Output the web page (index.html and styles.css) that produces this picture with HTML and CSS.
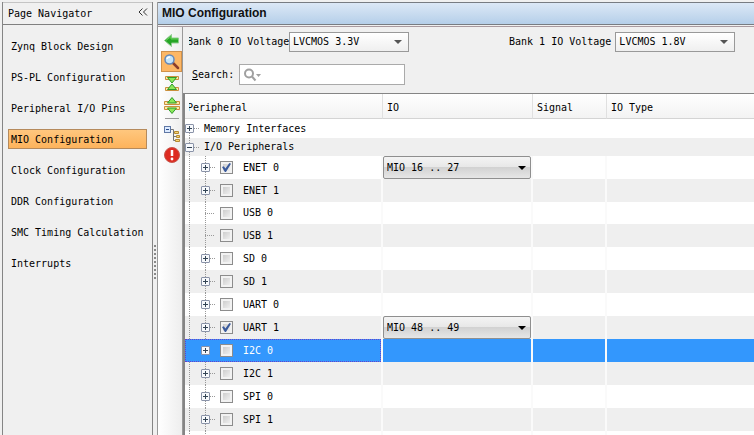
FILE: index.html
```html
<!DOCTYPE html>
<html lang="en">
<head>
<meta charset="utf-8">
<title>MIO Configuration</title>
<link rel="stylesheet" href="styles.css">
</head>
<body>
<div class="app">
  <nav class="navigator">
    <header class="nav-head">
      <span>Page Navigator</span>
      <button class="collapse" type="button" aria-label="Collapse">
        <svg width="10" height="8" viewBox="0 0 10 8"><path d="M4.5 .5 1 4l3.5 3.5M9 .5 5.5 4 9 7.500" fill="none" stroke="#333"/></svg>
      </button>
    </header>
    <div class="nav-list">
      <a href="#zynq">Zynq Block Design</a>
      <a href="#pspl">PS-PL Configuration</a>
      <a href="#pins">Peripheral I/O Pins</a>
      <a href="#mio" class="active">MIO Configuration</a>
      <a href="#clock">Clock Configuration</a>
      <a href="#ddr">DDR Configuration</a>
      <a href="#smc">SMC Timing Calculation</a>
      <a href="#irq">Interrupts</a>
    </div>
  </nav>
  <div class="splitter"><i></i></div>
  <main class="pane">
    <h1>MIO Configuration</h1>
    <div class="body">
      <div class="tools">
        <button type="button" aria-label="Back"><svg width="18" height="18" viewBox="0 0 18 18"><path d="M1.500 9.500 8.500 3.500v3.500h7v5h-7v3.500z" fill="#25a525" stroke="#8fce8f"/><path d="M3 9.500 8 5.500v2.500h7" fill="none" stroke="#64cf55"/></svg></button>
        <button type="button" class="on" aria-label="Search"><svg width="18" height="18" viewBox="0 0 18 18"><path d="M10 10l5 5" stroke="#8b3d2b" stroke-width="2.500" stroke-linecap="round"/><circle cx="6.500" cy="6.500" r="4.500" fill="#c5e5fb" stroke="#6389bb" stroke-width="1.500"/><path d="M4 6q.5-2 3-2" fill="none" stroke="#fff" stroke-width="1.500"/></svg></button>
        <button type="button" aria-label="Collapse all"><svg width="18" height="18" viewBox="0 0 18 18"><path d="M2.500 2.500h13v3h-13zM2.500 13.500h13v3h-13z" fill="#ffe9a8" stroke="#c9903c"/><path d="M4.500 3.500h9L9 9zM4.500 15.500h9L9 10z" fill="#8be85a" stroke="#2f9a2a"/></svg></button>
        <button type="button" aria-label="Expand all"><svg width="18" height="18" viewBox="0 0 18 18"><path d="M1.500 5.500h15v3h-15zM1.500 10.500h15v3h-15z" fill="#ffe9a8" stroke="#c9903c"/><path d="M4.500 7h9L9 1.500zM4.500 12h9L9 17.500z" fill="#8be85a" stroke="#2f9a2a"/></svg></button>
        <hr>
        <button type="button" aria-label="Tree"><svg width="18" height="18" viewBox="0 0 18 18"><rect x="1.500" y="1.500" width="6" height="6" fill="#dceaff" stroke="#6078a5"/><path d="M3 4.500h3" stroke="#274b8c"/><path d="M8 4.500h2.500v11H13M11 7.500h2M11 11.500h3" fill="none" stroke="#747474"/><path d="M11.500 6.500h4v2h-4zM13.500 10.500h3v2h-3zM12.500 14.500h4v2h-4z" fill="#f9d675" stroke="#b58a32"/></svg></button>
        <button type="button" aria-label="Errors"><svg width="18" height="18" viewBox="0 0 18 18"><circle cx="9" cy="8" r="7.500" fill="#dd2c22" stroke="#c8574e"/><path d="M9 3v6" stroke="#fff" stroke-width="2.500"/><circle cx="9" cy="12" r="1.400" fill="#fff"/></svg></button>
      </div>
      <div class="content">
        <div class="filters">
          <div class="voltages">
            <div class="field"><label class="cut" for="b0">Bank 0 IO Voltage</label><span class="drop"><select id="b0"><option>LVCMOS 3.3V</option></select></span></div>
            <div class="field second"><label for="b1">Bank 1 IO Voltage</label><span class="drop"><select id="b1"><option>LVCMOS 1.8V</option></select></span></div>
          </div>
          <div class="search">
            <label for="q"><u>S</u>earch:</label>
            <div class="box">
              <svg width="18" height="14" viewBox="0 0 18 14"><circle cx="5" cy="5.500" r="4" fill="none" stroke="#a0a0a0" stroke-width="2"/><path d="M8 8.500l3.500 4" stroke="#a0a0a0" stroke-width="2"/><path d="M12 6h5l-2.500 3z" fill="#a0a0a0"/></svg>
              <input id="q" type="text">
            </div>
          </div>
        </div>
        <div class="grid">
          <table>
            <colgroup><col class="c1"><col class="c2"><col class="c3"><col></colgroup>
            <thead><tr><th><span class="cut">Peripheral</span></th><th>IO</th><th>Signal</th><th>IO Type</th></tr></thead>
            <tbody>
              <tr class="group first"><td colspan="4"><div class="node"><button class="exp" type="button" aria-label="Expand"></button><i></i><span>Memory Interfaces</span></div></td></tr>
              <tr class="group alt"><td colspan="4"><div class="node"><button class="exp open" type="button" aria-label="Collapse"></button><i></i><span>I/O Peripherals</span></div></td></tr>
              <tr><td><div class="node"><button class="exp" type="button" aria-label="Expand"></button><i></i><label><input type="checkbox" checked>ENET 0</label></div></td><td><span class="drop raised"><select aria-label="ENET 0 IO"><option>MIO 16 .. 27</option></select></span></td><td></td><td></td></tr>
              <tr class="alt"><td><div class="node"><button class="exp" type="button" aria-label="Expand"></button><i></i><label><input type="checkbox">ENET 1</label></div></td><td></td><td></td><td></td></tr>
              <tr class="leaf short"><td><div class="node"><i></i><label><input type="checkbox">USB 0</label></div></td><td></td><td></td><td></td></tr>
              <tr class="alt leaf"><td><div class="node"><i></i><label><input type="checkbox">USB 1</label></div></td><td></td><td></td><td></td></tr>
              <tr><td><div class="node"><button class="exp" type="button" aria-label="Expand"></button><i></i><label><input type="checkbox">SD 0</label></div></td><td></td><td></td><td></td></tr>
              <tr class="alt"><td><div class="node"><button class="exp" type="button" aria-label="Expand"></button><i></i><label><input type="checkbox">SD 1</label></div></td><td></td><td></td><td></td></tr>
              <tr><td><div class="node"><button class="exp" type="button" aria-label="Expand"></button><i></i><label><input type="checkbox">UART 0</label></div></td><td></td><td></td><td></td></tr>
              <tr class="alt"><td><div class="node"><button class="exp" type="button" aria-label="Expand"></button><i></i><label><input type="checkbox" checked>UART 1</label></div></td><td><span class="drop raised"><select aria-label="UART 1 IO"><option>MIO 48 .. 49</option></select></span></td><td></td><td></td></tr>
              <tr class="selected"><td><div class="node"><button class="exp" type="button" aria-label="Expand"></button><i></i><label><input type="checkbox">I2C 0</label></div></td><td></td><td></td><td></td></tr>
              <tr class="alt"><td><div class="node"><button class="exp" type="button" aria-label="Expand"></button><i></i><label><input type="checkbox">I2C 1</label></div></td><td></td><td></td><td></td></tr>
              <tr><td><div class="node"><button class="exp" type="button" aria-label="Expand"></button><i></i><label><input type="checkbox">SPI 0</label></div></td><td></td><td></td><td></td></tr>
              <tr class="alt"><td><div class="node"><button class="exp" type="button" aria-label="Expand"></button><i></i><label><input type="checkbox">SPI 1</label></div></td><td></td><td></td><td></td></tr>
              <tr><td><div class="node"></div></td><td></td><td></td><td></td></tr>
            </tbody>
          </table>
        </div>
      </div>
    </div>
  </main>
</div>
</body>
</html>
```
FILE: styles.css
```css
* { box-sizing: border-box; }
body, button, select, input { font: 10px/14px "DejaVu Sans Mono", "Liberation Mono", monospace; color: #000; }
body { margin: 0; background: #f0f0f0; overflow: hidden; }
button { padding: 0; border: 0; background: none; }
svg { display: block; }
.app { display: flex; height: 100vh; padding: 2px 0 0 2px; }

.navigator { flex: 0 0 151px; display: flex; flex-direction: column; border: 1px solid #858585; border-width: 0 1px; }
.nav-head { display: flex; align-items: center; justify-content: space-between; height: 23px; padding: 0 4px 0 5px; border-top: 1px solid #c4c4c4; border-bottom: 1px solid #808080; }
.collapse { margin-bottom: 4px; }
.nav-list { display: flex; flex-direction: column; gap: 11px; padding: 11px 5px; }
.nav-list a { height: 20px; padding: 0 2px; border: 1px solid transparent; line-height: 19px; color: #000; text-decoration: none; white-space: nowrap; }
.nav-list .active { border-color: #b58a5c; background: linear-gradient(#ffc77e, #fdb35c); }

.splitter { flex: 0 0 4px; display: flex; align-items: center; padding-top: 87px; }
.splitter i { width: 2px; height: 34px; margin-left: 1px; background: repeating-linear-gradient(#888 0 2px, transparent 2px 4px); }

.pane { flex: 1; min-width: 0; display: flex; flex-direction: column; border-left: 1px solid #999; }
h1 { margin: 0; height: 23px; padding: 0 4px; border: 1px solid #787c82; border-width: 1px 0; background: linear-gradient(#dce8f6, #b5cfe9); font: bold 12px/20px "Liberation Sans", Arial, sans-serif; color: #111; }
.body { flex: 1; min-height: 0; display: flex; margin-top: 1px; border-top: 1px solid #a99a9f; }

.tools { flex: 0 0 25px; display: flex; flex-direction: column; padding: 2px 0 0 3px; border-right: 1px solid #999; background: linear-gradient(90deg, #fff, #eee); }
.tools button { display: flex; align-items: center; justify-content: center; height: 22px; }
.tools .on { height: 21px; border: 1px solid #d0914c; background: #fdb765; }
.tools hr { width: 14px; height: 1px; margin: 2px auto 4px; border: 0; background: #999; }

.content { flex: 1; min-width: 0; display: flex; flex-direction: column; }
.filters { display: flex; flex-direction: column; gap: 12px; height: 66px; padding: 5px 19px 0 6px; }
.voltages { display: flex; }
.field { display: flex; align-items: center; }
.second { margin-left: 100px; gap: 4px; }
.field label { white-space: nowrap; }
.field .cut { width: 100px; }
.cut { display: block; overflow: hidden; text-indent: -2px; }
.drop { position: relative; display: block; width: 120px; }
.drop select { appearance: none; display: block; width: 100%; height: 20px; padding: 0 3px; border: 1px solid #999; border-radius: 0; background: linear-gradient(#fff, #efefef); }
.drop::after { content: ""; position: absolute; right: 7px; top: 8px; border: 4px solid transparent; border-top-color: #555; border-bottom: 0; pointer-events: none; }
.drop.raised { width: 100%; }
.raised select { height: 23px; border-color: #8f8f8f; border-radius: 2px; background: linear-gradient(#f4f4f4, #e7e7e7 50%, #d2d2d2 50%, #e6e6e6); }
.drop.raised::after { right: 5px; top: 10px; border-top-color: #000; }
.search { display: flex; align-items: center; gap: 5px; padding-left: 3px; }
.search .box { display: flex; align-items: center; width: 166px; height: 21px; padding-left: 4px; border: 1px solid #aaa; background: #fff; }
.search input { flex: 1; min-width: 0; border: 0; outline: 0; background: none; }

.grid { flex: 1; min-height: 0; overflow: hidden; border: 1px solid #858585; border-width: 1px 0 0 2px; background: #fff; }
table { width: 100%; table-layout: fixed; border-collapse: separate; border-spacing: 0; }
.c1 { width: 198px; }
.c2 { width: 150px; }
.c3 { width: 74px; }
th { height: 25px; padding: 4px 0 0 4px; border-right: 1px solid #e0e0e0; border-bottom: 1px solid #d4d4d4; background: linear-gradient(#fff, #f3f3f3); text-align: left; font-weight: normal; }
td { height: 23px; padding: 0; border-right: 2px solid #fafafa; }
th:last-child, td:last-child { border-right: 0; }
.alt td { background: #efefef; }
.node { display: flex; align-items: center; height: 23px; padding-left: 16px; background:
  repeating-linear-gradient(#999 0 1px, transparent 1px 2px) 4px 0 / 1px 100% no-repeat,
  repeating-linear-gradient(#999 0 1px, transparent 1px 2px) 20px 0 / 1px 100% no-repeat; }
.node i { width: 5px; height: 1px; background: repeating-linear-gradient(90deg, #999 0 1px, transparent 1px 2px); }
.node label { display: flex; align-items: center; gap: 10px; margin-left: 5px; }
.leaf .node { padding-left: 20px; }
.leaf i { width: 10px; }
.short td, .short .node { height: 22px; }
.group .node { height: 18px; padding-left: 0; background-size: 1px 100%, 0 0; }
.group td { height: 18px; }
.first td { height: 19px; }
.first .node { background-position: 4px 9px; }
.group span { margin-left: 5px; }
.exp { flex: none; width: 9px; height: 9px; border: 1px solid #8a93a8; border-radius: 1px; background:
  linear-gradient(#345, #345) center / 5px 1px no-repeat,
  linear-gradient(#345, #345) center / 1px 5px no-repeat, #f7f9fc; }
.exp.open { background-size: 5px 1px, 0 0, auto; }
input[type="checkbox"] { appearance: none; position: relative; width: 13px; height: 13px; margin: 0; border: 1px solid #8c8c8c; background: linear-gradient(135deg, #c4c4c4, #f8f8f8); box-shadow: inset 0 0 0 2px #f2f2f2; }
input[type="checkbox"]:checked::before { content: ""; position: absolute; inset: 1px; background: #3a5a9c; clip-path: polygon(0 45%, 20% 35%, 38% 62%, 82% 0, 100% 8%, 44% 100%, 32% 100%); }
.selected td { background: #3397fd; color: #fff; }
.selected .node { border: 1px dotted #fff; outline: 1px dotted #6840c8; outline-offset: -1px; padding-left: 15px; background: none; }
.selected i { visibility: hidden; }
```
